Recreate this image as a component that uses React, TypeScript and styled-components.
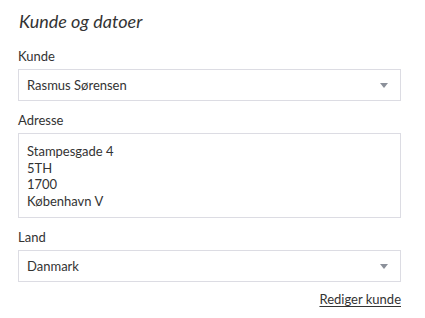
import React from "react";
import styled, { createGlobalStyle } from "styled-components";

const Global = createGlobalStyle`
  html, body { margin: 0; padding: 0; background: #ffffff; }
  body { font-family: "Lato", "Open Sans", sans-serif; color: #333333; }
`;

const Panel = styled.section`
  display: flex;
  flex-direction: column;
  padding: 7px 24px 0 18px;
`;

const Title = styled.h2`
  margin: 0 0 12px 1px;
  font-size: 18px;
  line-height: 28px;
  font-style: italic;
  font-weight: 400;
  color: #333333;
`;

const Field = styled.div<{ $gap?: number }>`
  display: flex;
  flex-direction: column;
  margin-bottom: ${(p) => p.$gap ?? 10}px;
`;

const Label = styled.label`
  font-size: 13px;
  line-height: 18px;
  margin-bottom: 4px;
  color: #333333;
`;

const SelectBox = styled.div`
  position: relative;
  display: flex;
  align-items: center;
  height: 30px;
  padding: 0 30px 0 8px;
  border: 1px solid #dcdce3;
  font-size: 13px;
  color: #333333;
`;

const Caret = styled.span`
  position: absolute;
  right: 12px;
  top: 13px;
  width: 0;
  height: 0;
  border-left: 4.5px solid transparent;
  border-right: 4.5px solid transparent;
  border-top: 5px solid #8b909a;
`;

const AddressBox = styled.div`
  display: flex;
  flex-direction: column;
  padding: 9px 8px 8px 8px;
  border: 1px solid #dcdce3;
  font-size: 13px;
  line-height: 16.5px;
  color: #333333;
`;

const Actions = styled.div`
  display: flex;
  justify-content: flex-end;
  margin-top: -1px;
`;

const EditLink = styled.a`
  font-size: 13px;
  line-height: 18px;
  color: #333333;
  text-decoration: underline;
  text-underline-offset: 2px;
  cursor: pointer;
`;

function Select({ value }: { value: string }) {
  return (
    <SelectBox>
      {value}
      <Caret />
    </SelectBox>
  );
}

export default function App() {
  const address = ["Stampesgade 4", "5TH", "1700", "København V"];
  return (
    <>
      <Global />
      <Panel>
        <Title>Kunde og datoer</Title>
        <Field>
          <Label>Kunde</Label>
          <Select value="Rasmus Sørensen" />
        </Field>
        <Field>
          <Label>Adresse</Label>
          <AddressBox>
            {address.map((l) => (
              <span key={l}>{l}</span>
            ))}
          </AddressBox>
        </Field>
        <Field $gap={9}>
          <Label>Land</Label>
          <Select value="Danmark" />
        </Field>
        <Actions>
          <EditLink>Rediger kunde</EditLink>
        </Actions>
      </Panel>
    </>
  );
}
